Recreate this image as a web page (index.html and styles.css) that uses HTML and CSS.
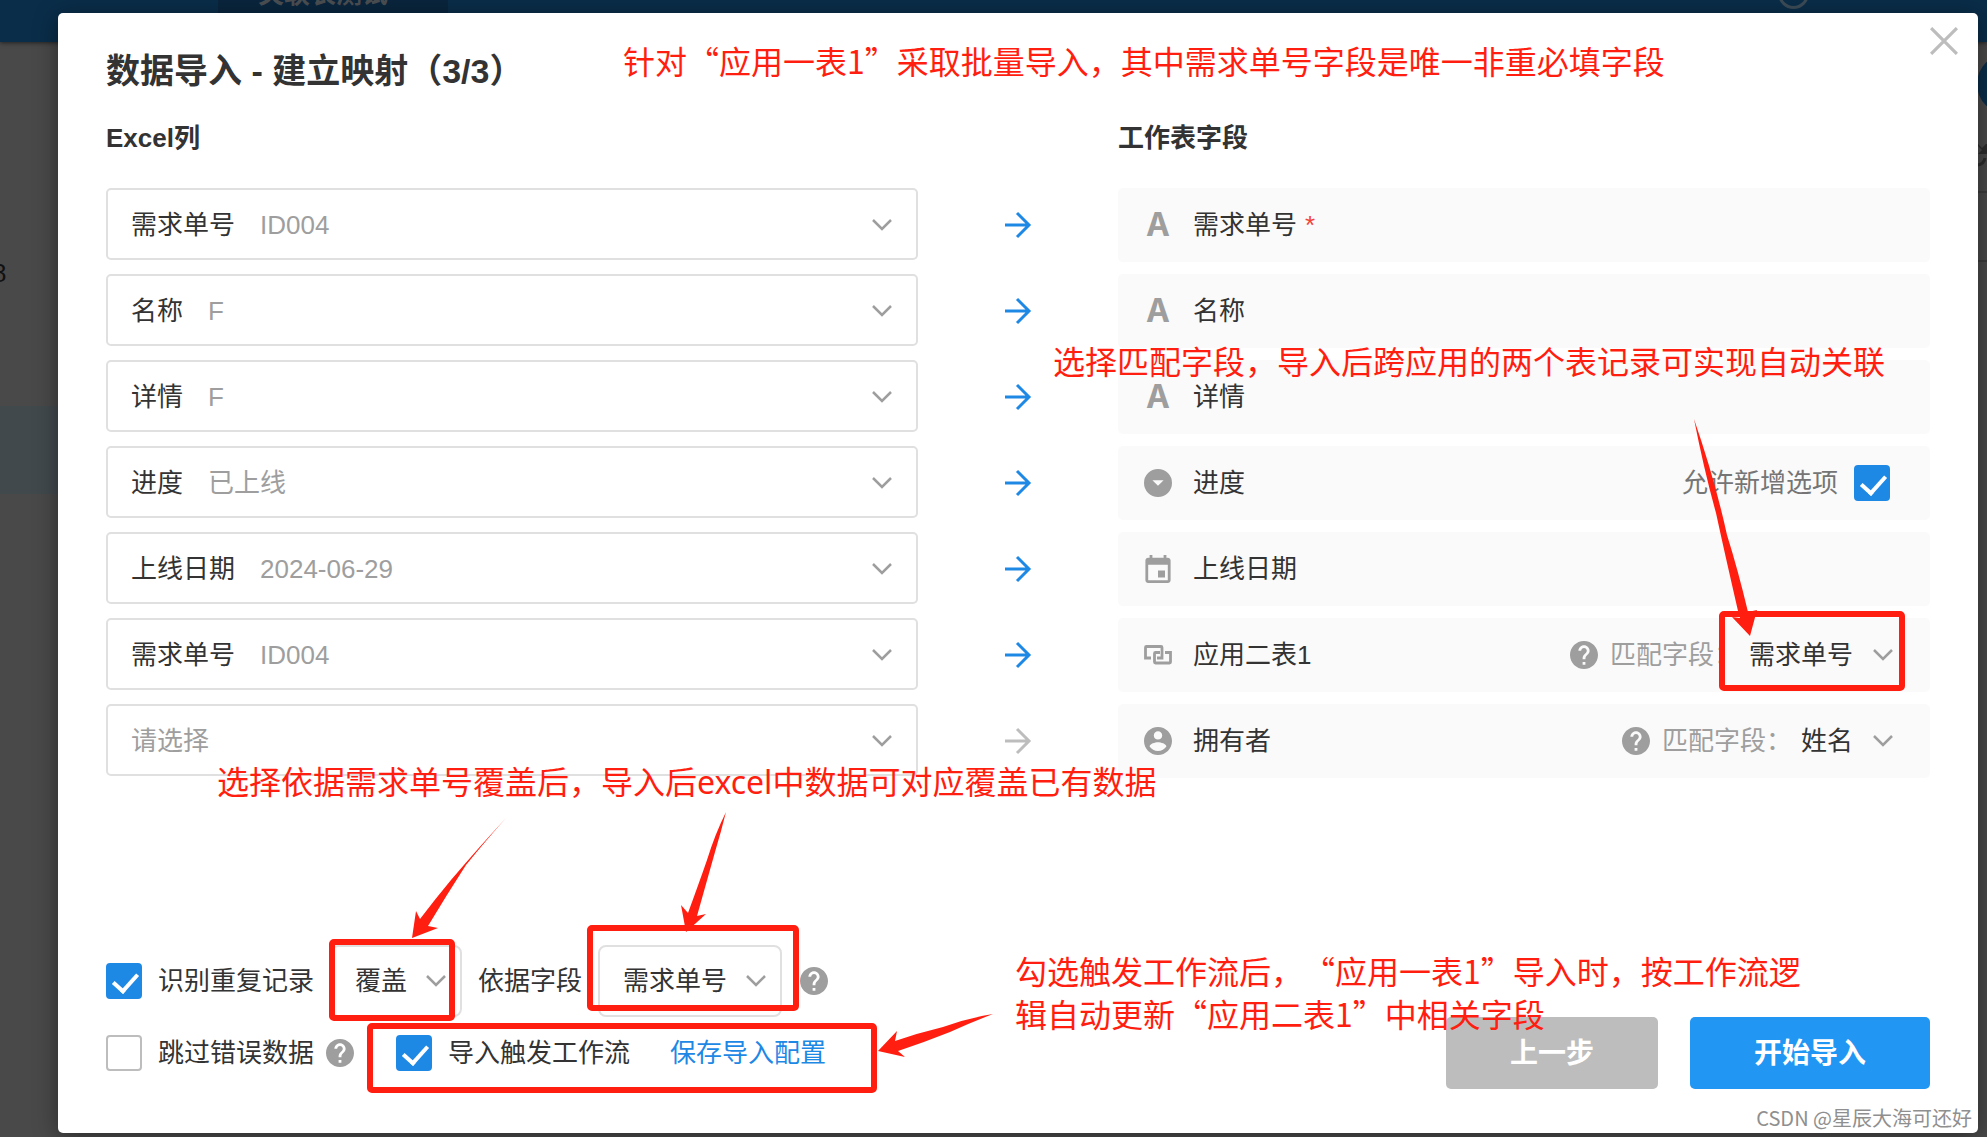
FILE: index.html
```html
<!DOCTYPE html>
<html lang="zh-CN">
<head>
    <meta charset="UTF-8">
    <title>数据导入</title>
    <link rel="stylesheet" href="styles.css">
</head>
<body>
    <!-- 图标 -->
    <svg class="sprite" aria-hidden="true">
        <symbol id="i-down" viewBox="0 0 20 12"><path d="M1 1l9 9 9-9" fill="none" stroke="currentColor" stroke-width="2.5"/></symbol>
        <symbol id="i-arrow" viewBox="0 0 28 28"><path d="M1 14h24M13 2l12 12-12 12" fill="none" stroke="currentColor" stroke-width="3"/></symbol>
        <symbol id="i-close" viewBox="0 0 26 26"><path d="M1 1l24 24M25 1L1 25" fill="none" stroke="currentColor" stroke-width="3"/></symbol>
        <symbol id="i-option" viewBox="2 2 20 20"><path fill-rule="evenodd" d="M12 2a10 10 0 100 20 10 10 0 000-20zM8 10h8l-4 4z" fill="currentColor"/></symbol>
        <symbol id="i-date" viewBox="2 1 20 20"><path d="M17 12h-5v5h5v-5zM16 1v2H8V1H6v2H5c-1.11 0-1.99.9-1.99 2L3 19c0 1.1.89 2 2 2h14c1.1 0 2-.9 2-2V5c0-1.1-.9-2-2-2h-1V1h-2zm3 18H5V8h14v11z" fill="currentColor"/></symbol>
        <symbol id="i-relate" viewBox="0 0 28 28"><path d="M7 17H1.5V6.5q0-1 1-1h14.500q1 0 1 1V17h-5M16 11.500h-4.500q-1 0-1 1V21q0 1 1 1H25.500q1 0 1-1v-9.500H21" fill="none" stroke="currentColor" stroke-width="2.8"/></symbol>
        <symbol id="i-user" viewBox="2 2 20 20"><path d="M12 2C6.48 2 2 6.48 2 12s4.48 10 10 10 10-4.48 10-10S17.52 2 12 2zm0 3c1.66 0 3 1.34 3 3s-1.34 3-3 3-3-1.34-3-3 1.34-3 3-3zm0 14.2c-2.5 0-4.71-1.28-6-3.22.03-1.99 4-3.08 6-3.08 1.99 0 5.97 1.09 6 3.08-1.29 1.94-3.5 3.22-6 3.22z" fill="currentColor"/></symbol>
        <symbol id="i-help" viewBox="2 2 20 20"><path d="M12 2C6.48 2 2 6.48 2 12s4.48 10 10 10 10-4.48 10-10S17.52 2 12 2zm1 17h-2v-2h2v2zm2.07-7.75l-.9.92C13.45 12.9 13 13.5 13 15h-2v-.5c0-1.1.45-2.1 1.17-2.83l1.24-1.26c.37-.36.59-.86.59-1.41 0-1.1-.9-2-2-2s-2 .9-2 2H8c0-2.21 1.79-4 4-4s4 1.79 4 4c0 .88-.36 1.68-.93 2.25z" fill="currentColor"/></symbol>
    </svg>

    <!-- 弹窗后面的页面 -->
    <div class="page">
        <div class="topbar"><span class="tab">关联表测试</span><i class="ring"></i></div>
        <span class="count">8</span>
        <div class="selected"></div>
        <div class="add"></div>
        <svg class="refresh" viewBox="0 0 9 24"><path d="M0 0l4 4 5-5v11H0l4-4-4-4z" fill="#2c2c2c"/><path d="M0 21q6-1 7-7" fill="none" stroke="#2c2c2c" stroke-width="3"/></svg>
        <div class="tools"></div>
    </div>

    <div class="modal">
        <button class="close" aria-label="关闭"><svg><use href="#i-close"/></svg></button>
        <h1>数据导入 - 建立映射（3/3）</h1>
        <div class="row heads">
            <h2>Excel列</h2>
            <span></span>
            <h2>工作表字段</h2>
        </div>

        <div class="rows">
            <div class="row">
                <div class="source"><select aria-label="需求单号"><option>需求单号</option></select><span class="sample">ID004</span><svg class="down"><use href="#i-down"/></svg></div>
                <svg class="arrow"><use href="#i-arrow"/></svg>
                <div class="field"><b class="icon">A</b><span>需求单号<em>*</em></span></div>
            </div>
            <div class="row">
                <div class="source"><select aria-label="名称"><option>名称</option></select><span class="sample">F</span><svg class="down"><use href="#i-down"/></svg></div>
                <svg class="arrow"><use href="#i-arrow"/></svg>
                <div class="field"><b class="icon">A</b><span>名称</span></div>
            </div>
            <div class="row">
                <div class="source"><select aria-label="详情"><option>详情</option></select><span class="sample">F</span><svg class="down"><use href="#i-down"/></svg></div>
                <svg class="arrow"><use href="#i-arrow"/></svg>
                <div class="field"><b class="icon">A</b><span>详情</span></div>
            </div>
            <div class="row">
                <div class="source"><select aria-label="进度"><option>进度</option></select><span class="sample">已上线</span><svg class="down"><use href="#i-down"/></svg></div>
                <svg class="arrow"><use href="#i-arrow"/></svg>
                <div class="field">
                    <svg class="icon"><use href="#i-option"/></svg><span>进度</span>
                    <div class="extra allow"><label for="allow">允许新增选项</label><input type="checkbox" id="allow" checked></div>
                </div>
            </div>
            <div class="row">
                <div class="source"><select aria-label="上线日期"><option>上线日期</option></select><span class="sample">2024-06-29</span><svg class="down"><use href="#i-down"/></svg></div>
                <svg class="arrow"><use href="#i-arrow"/></svg>
                <div class="field"><svg class="icon"><use href="#i-date"/></svg><span>上线日期</span></div>
            </div>
            <div class="row">
                <div class="source"><select aria-label="需求单号"><option>需求单号</option></select><span class="sample">ID004</span><svg class="down"><use href="#i-down"/></svg></div>
                <svg class="arrow"><use href="#i-arrow"/></svg>
                <div class="field">
                    <svg class="icon"><use href="#i-relate"/></svg><span>应用二表1</span>
                    <div class="extra match">
                        <svg class="help"><use href="#i-help"/></svg>
                        <label for="match1">匹配字段：</label>
                        <select id="match1"><option>需求单号</option></select>
                        <svg class="down"><use href="#i-down"/></svg>
                    </div>
                </div>
            </div>
            <div class="row">
                <div class="source empty"><select aria-label="请选择"><option>请选择</option></select><svg class="down"><use href="#i-down"/></svg></div>
                <svg class="arrow off"><use href="#i-arrow"/></svg>
                <div class="field">
                    <svg class="icon"><use href="#i-user"/></svg><span>拥有者</span>
                    <div class="extra match">
                        <svg class="help"><use href="#i-help"/></svg>
                        <label for="match2">匹配字段：</label>
                        <select id="match2"><option>姓名</option></select>
                        <svg class="down"><use href="#i-down"/></svg>
                    </div>
                </div>
            </div>
        </div>

        <div class="footer">
            <div class="options">
                <div class="line">
                    <input type="checkbox" id="repeat" checked><label for="repeat">识别重复记录</label>
                    <div class="pick"><select aria-label="重复时"><option>覆盖</option></select><svg class="down"><use href="#i-down"/></svg></div>
                    <label for="basis">依据字段</label>
                    <div class="pick"><select id="basis"><option>需求单号</option></select><svg class="down"><use href="#i-down"/></svg></div>
                    <svg class="help"><use href="#i-help"/></svg>
                </div>
                <div class="line second">
                    <input type="checkbox" id="skip"><label for="skip">跳过错误数据</label>
                    <svg class="help"><use href="#i-help"/></svg>
                    <input type="checkbox" id="flow" class="flow" checked><label for="flow">导入触发工作流</label>
                    <a href="#">保存导入配置</a>
                </div>
            </div>
            <div class="buttons">
                <button class="prev">上一步</button>
                <button class="start">开始导入</button>
            </div>
        </div>
    </div>

    <!-- 红色标注 -->
    <p class="note note1">针对“应用一表1”采取批量导入，其中需求单号字段是唯一非重必填字段</p>
    <p class="note note2">选择匹配字段，导入后跨应用的两个表记录可实现自动关联</p>
    <p class="note note3">选择依据需求单号覆盖后，导入后<span>excel</span>中数据可对应覆盖已有数据</p>
    <p class="note note4">勾选触发工作流后，“应用一表1”导入时，按工作流逻<br>辑自动更新“应用二表1”中相关字段</p>
    <svg class="marks" viewBox="0 0 1987 1137">
        <g fill="none" stroke="#ff1e10" stroke-width="6">
            <rect x="1722" y="614" width="180" height="74" rx="2"/>
            <rect x="332" y="942" width="120" height="76" rx="2"/>
            <rect x="590" y="928" width="206" height="80" rx="2"/>
            <rect x="370" y="1026" width="504" height="64" rx="2"/>
        </g>
        <g fill="#ff1e10">
            <path d="M1694 419Q1704 470 1716 513Q1724 550 1738 611L1740 618L1732 617L1750 636L1757 610L1748 612Q1738 570 1727 535Q1715 480 1694 419z"/>
            <path d="M506 818Q480 846 451 880Q436 898 420 919L416 911L412 938L438 928L428 926Q446 896 466 865Q488 838 506 818z"/>
            <path d="M726 812Q715 834 707 860Q699 883 688 913L681 905L686 932L706 914L697 916Q706 884 715 852Q721 832 726 812z"/>
            <path d="M993 1014Q968 1018 943 1027Q918 1033 895 1041L897 1031L878 1051L905 1057L898 1051Q925 1042 950 1032Q972 1022 993 1014z"/>
        </g>
    </svg>
    <span class="watermark">CSDN @星辰大海可还好</span>
</body>
</html>
```

FILE: styles.css
```css
* {
    box-sizing: border-box;
}

body {
    margin: 0;
    min-height: 100vh;
    padding: 13px 9px 4px 58px;
    position: relative;
    display: flex;
    overflow: hidden;
    background: #494949;
    color: #333;
    font-family: "Liberation Sans", "Noto Sans CJK SC", sans-serif;
    font-size: 26px;
    line-height: 36px;
}

h1, h2, p {
    margin: 0;
}

svg {
    display: block;
    flex: none;
}

.sprite {
    position: absolute;
    width: 0;
    height: 0;
}

/* 背景页面 */
.page {
    position: absolute;
    inset: 0;
    overflow: hidden;
}

.topbar {
    height: 42px;
    background: #0a2d49;
    box-shadow: 0 1px 4px #222;
}

.tab {
    position: absolute;
    left: 218px;
    top: -24px;
    width: 230px;
    height: 66px;
    padding-left: 40px;
    background: #09253d;
    color: #4c4f52;
    font-weight: bold;
}

.ring {
    position: absolute;
    right: 178px;
    top: -22px;
    width: 31px;
    height: 31px;
    border: 3px solid #3d4c58;
    border-radius: 50%;
}

.count {
    position: absolute;
    left: -8px;
    top: 255px;
    color: #111;
}

.selected {
    position: absolute;
    left: 0;
    top: 406px;
    width: 58px;
    height: 88px;
    background: #42494d;
}

.add {
    position: absolute;
    right: -50px;
    top: 54px;
    width: 60px;
    height: 60px;
    border-radius: 50%;
    background: #0a2d49;
}

.refresh {
    position: absolute;
    right: 0;
    top: 144px;
    width: 9px;
    height: 24px;
}

.tools {
    position: absolute;
    right: 0;
    top: 191px;
    width: 9px;
    height: 71px;
    border: solid #3b3b3b;
    border-width: 2px 0;
}

/* 弹窗 */
.modal {
    position: relative;
    flex: 1;
    display: flex;
    flex-direction: column;
    padding: 36px 48px 44px;
    border-radius: 5px;
    background: #fff;
    box-shadow: 0 4px 24px rgba(0, 0, 0, 0.4);
}

.close {
    position: absolute;
    right: 20px;
    top: 14px;
    padding: 0;
    border: 0;
    background: none;
    color: #bdbdbd;
}

.close svg {
    width: 28px;
    height: 28px;
}

h1 {
    font-size: 34px;
    line-height: 44px;
}

h2 {
    font-size: 26px;
    line-height: 36px;
}

.row {
    display: grid;
    grid-template-columns: 1fr 200px 1fr;
}

.heads {
    margin: 27px 0 32px;
}

.rows {
    display: grid;
    gap: 12px;
}

.source {
    display: flex;
    align-items: center;
    height: 72px;
    padding: 1px 24px 0 23px;
    border: 2px solid #e0e0e0;
    border-radius: 5px;
}

select {
    appearance: none;
    padding: 0;
    border: 0;
    background: none;
    color: #333;
    font: inherit;
}

.sample {
    margin-left: 24px;
    color: #9e9e9e;
}

.empty select {
    color: #9e9e9e;
}

.down {
    width: 20px;
    height: 12px;
    color: #9e9e9e;
}

.source .down {
    margin-left: auto;
}

.arrow {
    width: 28px;
    height: 28px;
    margin: auto;
    color: #1e88e5;
}

.arrow.off {
    color: #bdbdbd;
}

.field {
    display: flex;
    align-items: center;
    height: 74px;
    padding: 0 37px 1px 26px;
    border-radius: 5px;
    background: #fafafa;
}

.icon {
    width: 28px;
    height: 28px;
    margin-right: 21px;
    color: #9e9e9e;
}

b.icon {
    height: auto;
    font-family: Inter, sans-serif;
    font-size: 32px;
    text-align: center;
}

.field em {
    margin-left: 8px;
    color: #f44336;
    font-style: normal;
}

.extra {
    display: flex;
    align-items: center;
    margin-left: auto;
}

.allow {
    padding-right: 3px;
    gap: 16px;
    color: #757575;
}

.match label {
    margin: 0 9px 0 12px;
    color: #9e9e9e;
}

.match .down {
    margin-left: 19px;
}

.help {
    width: 28px;
    height: 28px;
    color: #9e9e9e;
}

input[type="checkbox"] {
    appearance: none;
    flex: none;
    position: relative;
    width: 36px;
    height: 36px;
    margin: 0;
    border: 2px solid #bdbdbd;
    border-radius: 4px;
    background: #fff;
}

input[type="checkbox"]:checked {
    border-color: #1e88e5;
    background: #1e88e5;
}

input[type="checkbox"]:checked::after {
    content: "";
    position: absolute;
    left: 10px;
    top: 3px;
    width: 11px;
    height: 20px;
    border: solid #fff;
    border-width: 0 4px 4px 0;
    transform: rotate(42deg);
}

/* 底部 */
.footer {
    display: flex;
    align-items: flex-end;
    justify-content: space-between;
    margin-top: auto;
}

.line {
    display: flex;
    align-items: center;
    height: 72px;
}

.line input + label {
    margin-left: 16px;
}

.pick {
    display: flex;
    align-items: center;
    height: 72px;
    margin: 0 16px;
    padding: 0 14px 0 23px;
    border: 2px solid #e0e0e0;
    border-radius: 8px;
}

.pick .down {
    margin-left: 18px;
}

.line .help {
    margin-left: 2px;
}

.second .help {
    margin-left: 12px;
}

.line .flow {
    margin-left: 42px;
}

.line a {
    margin-left: 40px;
    color: #1e88e5;
    text-decoration: none;
}

.buttons {
    display: flex;
    gap: 32px;
}

.buttons button {
    height: 72px;
    padding: 2px 64px 0;
    border: 0;
    border-radius: 5px;
    background: #2196f3;
    color: #fff;
    font: inherit;
    font-size: 28px;
    font-weight: bold;
}

.buttons .prev {
    background: #bdbdbd;
}

/* 标注 */
.note {
    position: absolute;
    color: #ff1e10;
    font-family: "Noto Sans CJK SC", sans-serif;
    font-size: 32px;
    line-height: 43px;
    white-space: nowrap;
    text-spacing-trim: space-all;
}

.note span {
    font-family: "Noto Sans", sans-serif;
}

.note1 {
    left: 623px;
    top: 39px;
}

.note2 {
    left: 1053px;
    top: 339px;
}

.note3 {
    left: 217px;
    top: 759px;
}

.note4 {
    left: 1015px;
    top: 949px;
}

.marks {
    position: absolute;
    left: 0;
    top: 0;
    width: 1987px;
    height: 1137px;
    pointer-events: none;
}

.watermark {
    position: absolute;
    right: 15px;
    bottom: 4px;
    color: #8f8f8f;
    font-family: "Noto Sans CJK SC", sans-serif;
    font-size: 20px;
    line-height: 30px;
}
```
